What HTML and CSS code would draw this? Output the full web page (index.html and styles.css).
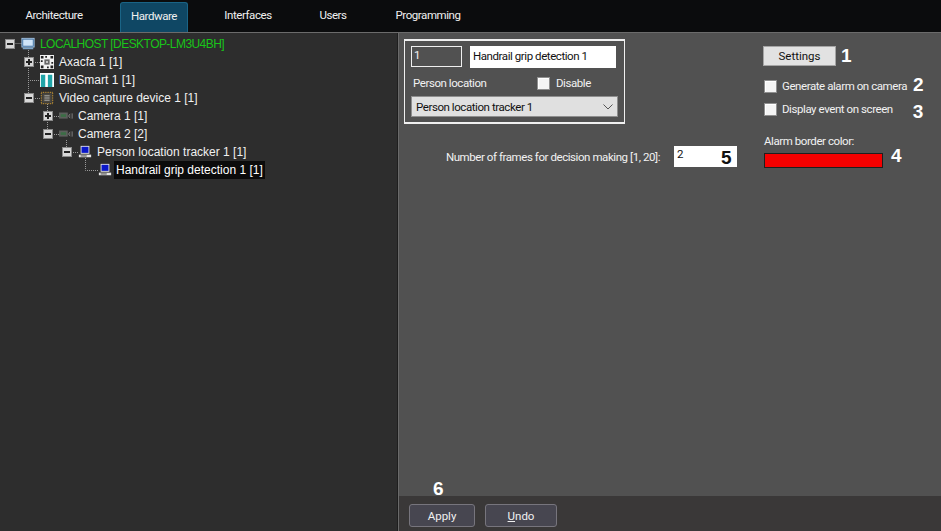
FILE: index.html
```html
<!DOCTYPE html>
<html lang="en">
<head>
<meta charset="utf-8">
<title>Hardware</title>
<link rel="stylesheet" href="styles.css">
</head>
<body>
<nav class="tabs">
  <a class="tab t1">Architecture</a>
  <a class="tab t2 active">Hardware</a>
  <a class="tab t3">Interfaces</a>
  <a class="tab t4">Users</a>
  <a class="tab t5">Programming</a>
</nav>
<main class="main">
  <section class="tree">
    <svg class="lines" width="120" height="180" viewBox="0 0 120 180">
      <path d="M14.500 43.500H22M28.500 50V98M33 62.500H40M28 80.500H40M33 98.500H40M47.500 104V134M52 116.500H59M52 134.500H59M66.500 140V152M71 152.500H78M85.500 158V170.500H98" fill="none" stroke="#9a9a9a" stroke-dasharray="1 1"/>
    </svg>
    <div class="row d0">
      <span class="exp"><i class="h"></i></span>
      <svg class="ico" viewBox="0 0 16 16"><rect x="1" y="1.500" width="14" height="10" fill="#3f6f9f" stroke="#a9c8e6"/><rect x="2.500" y="3" width="11" height="7" fill="#cfe4f7"/><rect x="2" y="12" width="12" height="2" fill="#7fa6c8"/></svg>
      <span class="lbl green">LOCALHOST [DESKTOP-LM3U4BH]</span>
    </div>
    <div class="row d1">
      <span class="exp"><i class="h"></i><i class="v"></i></span>
      <svg class="ico" viewBox="0 0 16 16"><rect width="16" height="16" fill="#f2f2f2"/><path d="M1 1h3v3H1zM12 1h3v3h-3zM1 12h3v3H1zM12 12h3v3h-3zM6 1h2v2H6zM1 6h2v2H1zM13 8h2v2h-2zM8 13h2v2H8z" fill="#222"/><rect x="5" y="5" width="6" height="6" fill="#666"/><rect x="7" y="7" width="2" height="2" fill="#ddd"/></svg>
      <span class="lbl">Axacfa 1 [1]</span>
    </div>
    <div class="row d1">
      <span class="exp none"></span>
      <svg class="ico" viewBox="0 0 16 16"><rect width="16" height="16" fill="#fff"/><rect x="1" y="2" width="5" height="14" fill="#21a5a8"/><rect x="9" y="2" width="5" height="14" fill="#21a5a8"/></svg>
      <span class="lbl">BioSmart 1 [1]</span>
    </div>
    <div class="row d1">
      <span class="exp"><i class="h"></i></span>
      <svg class="ico" viewBox="0 0 16 16"><rect x="1.500" y="1.500" width="13" height="13" fill="#3a3a3a" stroke="#f0b030" stroke-dasharray="1 1"/><rect x="3" y="3" width="10" height="10" fill="#4a473f"/><path d="M5 5.500h6M5 8h6M5 10.500h6" stroke="#c0c0c0"/></svg>
      <span class="lbl">Video capture device 1 [1]</span>
    </div>
    <div class="row d2">
      <span class="exp"><i class="h"></i><i class="v"></i></span>
      <svg class="ico" viewBox="0 0 16 16"><rect x="0" y="4" width="10" height="7" fill="#5c5f5c"/><rect x="2" y="6" width="6" height="3" fill="#3b6e45"/><path d="M11 7.500l2-2M11 8h2M11 8.500l2 2M15 5v6" stroke="#8a8a8a"/></svg>
      <span class="lbl">Camera 1 [1]</span>
    </div>
    <div class="row d2">
      <span class="exp"><i class="h"></i></span>
      <svg class="ico" viewBox="0 0 16 16"><rect x="0" y="4" width="10" height="7" fill="#5c5f5c"/><rect x="2" y="6" width="6" height="3" fill="#3b6e45"/><path d="M11 7.500l2-2M11 8h2M11 8.500l2 2M15 5v6" stroke="#8a8a8a"/></svg>
      <span class="lbl">Camera 2 [2]</span>
    </div>
    <div class="row d3">
      <span class="exp"><i class="h"></i></span>
      <svg class="ico" viewBox="0 0 16 16"><rect x="3" y="1" width="10" height="9" fill="#e8e8e8"/><rect x="4" y="2" width="8" height="7" fill="#0a17c8"/><rect x="1" y="11" width="14" height="3" fill="#e4e4e4"/><path d="M3 12.500h7" stroke="#333"/></svg>
      <span class="lbl">Person location tracker 1 [1]</span>
    </div>
    <div class="row d4">
      <svg class="ico" viewBox="0 0 16 16"><rect x="3" y="1" width="10" height="9" fill="#e8e8e8"/><rect x="4" y="2" width="8" height="7" fill="#0a17c8"/><rect x="1" y="11" width="14" height="3" fill="#e4e4e4"/><path d="M3 12.500h7" stroke="#333"/></svg>
      <span class="lbl selected">Handrail grip detection 1 [1]</span>
    </div>
  </section>
  <section class="panel">
    <div class="settings">
      <div class="col-left">
        <div class="box">
          <div class="box-row top">
            <span class="idfield">1</span>
            <span class="namefield">Handrail grip detection 1</span>
          </div>
          <div class="box-row mid">
            <span class="loc">Person location</span>
            <label class="check"><span class="cb"></span>Disable</label>
          </div>
          <div class="select"><span>Person location tracker 1</span>
            <svg width="10" height="6" viewBox="0 0 10 6"><path d="M.5.5L5 5 9.500.5" fill="none" stroke="#555"/></svg>
          </div>
        </div>
        <div class="frames">
          <span>Number of frames for decision making [1, 20]:</span>
          <span class="framefield">2<b class="num n5">5</b></span>
        </div>
      </div>
      <div class="col-right">
        <div class="line l1"><button class="btn-light">Settings</button><b class="num">1</b></div>
        <div class="line l2"><label class="check"><span class="cb"></span>Generate alarm on camera</label><b class="num up">2</b></div>
        <div class="line l3"><label class="check"><span class="cb"></span>Display event on screen</label><b class="num down">3</b></div>
        <div class="alarm-label">Alarm border color:</div>
        <div class="line l4"><span class="swatch"></span><b class="num raised">4</b></div>
      </div>
    </div>
    <b class="num n6">6</b>
    <footer class="footer">
      <button class="btn-dark apply">Apply</button>
      <button class="btn-dark undo"><u>U</u>ndo</button>
    </footer>
  </section>
</main>
</body>
</html>
```
FILE: styles.css
```css
* { box-sizing: border-box; }
html, body { margin: 0; height: 100%; }
body {
  width: 941px; height: 531px; overflow: hidden;
  display: flex; flex-direction: column;
  background: #2e2e2e; color: #f0f0f0;
  font: 11.5px Roboto, "Liberation Sans", sans-serif;
  letter-spacing: -.43px;
}
.tabs {
  height: 33px; flex: none; display: flex;
  background: #0b0c0d; border-bottom: 1px solid #6b6b6b;
  padding-top: 2px;
}
.tab { display: block; height: 30px; line-height: 26px; text-align: center; flex: none; }
.t1 { width: 120px; padding-right: 12px; }
.t2 { width: 68px; background: #0f4764; border: 1px solid #1a6486; border-bottom: 0; border-radius: 3px 3px 0 0; }
.t3 { width: 120px; }
.t4 { width: 52px; margin-left: -1px; }
.t5 { width: 122px; margin-left: 8px; }
.main { flex: 1; display: flex; min-height: 0; }
.tree {
  width: 398px; flex: none; position: relative;
  background: #2d2d2d; border-right: 1px solid #1e1e1e;
  padding-top: 2px;
  font-family: "Liberation Sans", sans-serif;
  font-size: 12px;
  letter-spacing: 0;
}
.lines { position: absolute; left: 0; top: -33px; pointer-events: none; }
.row { height: 18px; display: flex; align-items: center; position: relative; }
.d0 { padding-left: 5px; }
.d1 { padding-left: 24px; }
.d2 { padding-left: 43px; }
.d3 { padding-left: 62px; }
.d4 { padding-left: 98px; }
.exp {
  width: 10px; height: 10px; flex: none; margin-right: 6px; position: relative;
  background: #d8d8d8; border: 1px solid #8a8a8a;
}
.exp.none { background: none; border: 0; }
.exp i { position: absolute; background: #222; }
.exp .h { left: 1px; right: 1px; top: 3px; height: 2px; }
.exp .v { top: 1px; bottom: 1px; left: 3px; width: 2px; }
.ico { width: 14px; height: 14px; flex: none; }
.lbl { margin-left: 5px; white-space: nowrap; line-height: 18px; }
.green { color: #19c419; letter-spacing: -.55px; }
.selected { background: #0b0b0b; color: #fff; margin-left: 2px; padding: 0 2px; }
.panel { flex: 1; display: flex; flex-direction: column; background: #515151; position: relative; border-left: 1px solid #6a6a6a; }
.settings { flex: 1; display: flex; padding: 6px 0 0 5px; color: #f2f2f2; }
.col-left { width: 333px; flex: none; margin-right: 27px; }
.box { width: 221px; height: 85px; border: 1px solid #f0f0f0; padding: 5px 6px 0 6px; border-width: 2px 1.500px; }
.box-row { display: flex; }
.top { gap: 8px; }
.idfield { width: 51px; height: 21px; border: 1px solid #f0f0f0; padding-left: 2px; line-height: 17px; }
.namefield { width: 146px; height: 22px; background: #fff; color: #111; padding-left: 3px; line-height: 20px; }
.mid { margin-top: 5px; height: 20px; align-items: center; padding-left: 2px; }
.loc { width: 124px; }
.check { display: flex; align-items: center; gap: 6px; }
.cb { width: 13px; height: 13px; flex: none; background: #f4f4f4; border: 1px solid #8f8f8f; box-shadow: inset 1px 1px 0 #fff; }
.select {
  width: 207px; height: 21px; margin-top: 3px; background: #e0e0e0; color: #111;
  border: 1px solid #8e8e8e; padding: 0 4px; display: flex; align-items: center; justify-content: space-between;
}
.frames { display: flex; align-items: center; justify-content: flex-end; gap: 14px; margin-top: 22px; width: 333px; }
.framefield { width: 63px; height: 21px; background: #fff; color: #111; padding-left: 3px; line-height: 17px; position: relative; flex: none; }
.num { font: bold 19px "Liberation Sans", sans-serif; color: #fff; letter-spacing: 0; }
.n5 { position: absolute; left: 47px; top: 3px; color: #111; line-height: 18px; }
.n6 { position: absolute; left: 34px; top: 446px; line-height: 20px; }
.up { margin-top: -2px; }
.down { margin-top: 6px; }
.raised { margin-top: -8px; }
.col-right { flex: 1; padding-top: 7px; white-space: nowrap; }
.line { display: flex; align-items: center; }
.l1 { height: 20px; margin-left: -1px; gap: 5px; }
.btn-light { width: 73px; height: 20px; padding: 0; background: #e2e2e2; border: 1px solid #a5a5a5; color: #111; font: inherit; }
.l2 { margin-top: 10px; height: 20px; gap: 6px; }
.l3 { margin-top: 3px; height: 20px; gap: 20px; }
.l2 .check, .l3 .check { gap: 5px; }
.alarm-label { margin-top: 14px; height: 17px; line-height: 17px; }
.l4 { margin-top: 3px; gap: 8px; align-items: flex-start; }
.swatch { width: 119px; height: 15px; background: #f60000; border: 1px solid #1f1f1f; }
.footer { height: 35px; flex: none; background: #3a3838; display: flex; gap: 10px; padding: 8px 0 0 10px; }
.btn-dark { height: 23px; background: #474650; border: 1px solid #77757d; border-radius: 3px; color: #f0f0f0; font: inherit; padding: 0; }
.apply { width: 66px; }
.undo { width: 72px; }
```
